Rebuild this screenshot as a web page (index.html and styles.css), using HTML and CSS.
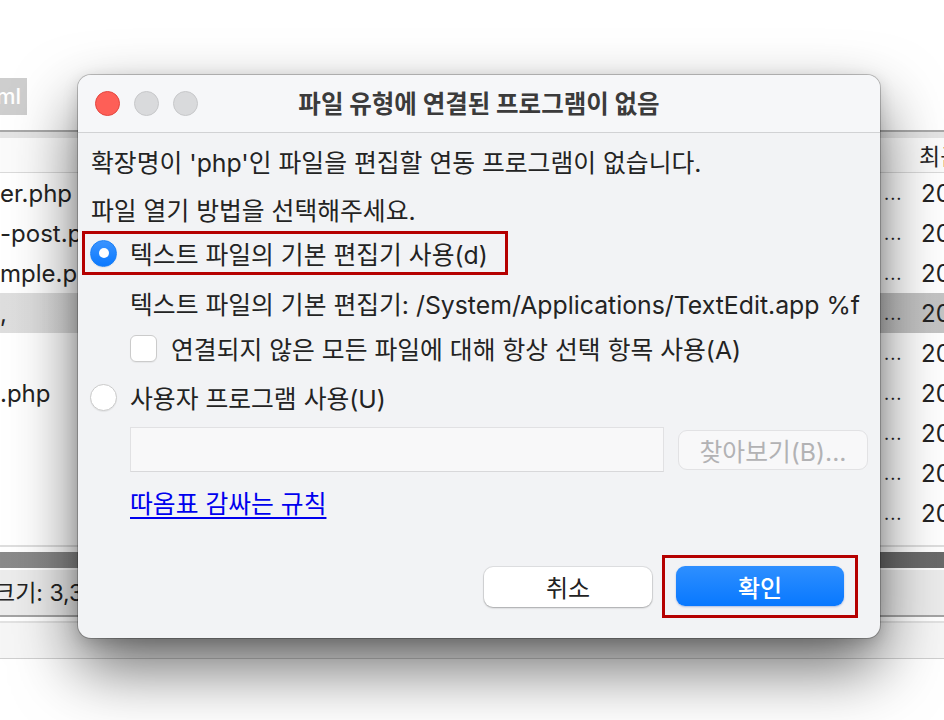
FILE: index.html
```html
<!DOCTYPE html>
<html lang="ko">
<head>
    <meta charset="UTF-8">
    <meta name="viewport" content="width=device-width, initial-scale=1.0">
    <title>파일 유형에 연결된 프로그램이 없음</title>
    <link rel="stylesheet" href="styles.css">
</head>
<body>
    <!-- window behind the dialog -->
    <div class="app">
        <div class="toolbar">
            <div class="tab">ml</div>
        </div>

        <div class="list-head">
            <span class="col-sep"></span>
            <span class="col-title">최근 수정</span>
        </div>

        <div class="rows">
            <div class="row"><span class="name">er.php</span><span class="ell">...</span><span class="date">2023-05-02</span></div>
            <div class="row"><span class="name">-post.php</span><span class="ell">...</span><span class="date">2023-05-02</span></div>
            <div class="row"><span class="name">mple.php</span><span class="ell">...</span><span class="date">2023-05-02</span></div>
            <div class="row selected"><span class="name">,</span><span class="ell">...</span><span class="date">2023-05-02</span></div>
            <div class="row"><span class="name"></span><span class="ell">...</span><span class="date">2023-05-02</span></div>
            <div class="row"><span class="name">.php</span><span class="ell">...</span><span class="date">2023-05-02</span></div>
            <div class="row"><span class="name"></span><span class="ell">...</span><span class="date">2023-05-02</span></div>
            <div class="row"><span class="name"></span><span class="ell">...</span><span class="date">2023-05-02</span></div>
            <div class="row"><span class="name"></span><span class="ell">...</span><span class="date">2023-05-02</span></div>
        </div>

        <div class="scroll-track"><div class="scroll-bar"></div></div>
        <div class="status">크기: 3,341 바이트</div>
        <div class="status-foot"></div>
    </div>

    <!-- dialog -->
    <div class="dialog">
        <div class="titlebar">
            <div class="lights">
                <span class="light red"></span>
                <span class="light"></span>
                <span class="light"></span>
            </div>
            <div class="title">파일 유형에 연결된 프로그램이 없음</div>
        </div>

        <div class="dialog-body">
            <div class="line">확장명이 'php'인 파일을 편집할 연동 프로그램이 없습니다.</div>
            <div class="line line-2">파일 열기 방법을 선택해주세요.</div>

            <div class="mark option-default">
                <span class="radio checked"></span>
                <span>텍스트 파일의 기본 편집기 사용(d)</span>
            </div>

            <div class="line indent path">텍스트 파일의 기본 편집기: /System/Applications/TextEdit.app %f</div>

            <div class="line indent check-row">
                <span class="checkbox"></span>
                <span>연결되지 않은 모든 파일에 대해 항상 선택 항목 사용(A)</span>
            </div>

            <div class="line option-user">
                <span class="radio"></span>
                <span>사용자 프로그램 사용(U)</span>
            </div>

            <div class="indent program-row">
                <div class="text-input"></div>
                <button class="browse-btn" disabled>찾아보기(B)...</button>
            </div>

            <div class="line indent link-row">
                <a href="#" class="rule-link">따옴표 감싸는 규칙</a>
            </div>

            <div class="footer">
                <button class="btn">취소</button>
                <span class="mark ok-mark"><button class="btn primary">확인</button></span>
            </div>
        </div>
    </div>
</body>
</html>
```

FILE: styles.css
```css
* {
    margin: 0;
    padding: 0;
    box-sizing: border-box;
}

body {
    width: 944px;
    height: 720px;
    overflow: hidden;
    background: #fff;
    font-family: 'Inter', 'Noto Sans CJK KR', sans-serif;
    color: #232323;
    position: relative;
}

/* background window */
.app {
    width: 944px;
}

.toolbar {
    height: 130px;
    padding-top: 78px;
}

.tab {
    width: 27px;
    height: 37px;
    background: #cecece;
    color: #fff;
    font-size: 22px;
    font-weight: 500;
    line-height: 37px;
    text-indent: -4px;
    overflow: hidden;
}

.list-head {
    height: 43px;
    border-top: 2px solid #a8a8a8;
    box-shadow: inset 0 6px 0 #e4e4e4;
    border-bottom: 1px solid #dadada;
    background: #fbfbfb;
    display: flex;
    align-items: center;
    padding-left: 915px;
    padding-top: 6px;
    font-size: 23px;
    white-space: nowrap;
    overflow: hidden;
}

.col-sep {
    width: 4px;
    height: 22px;
    background: #dcdcdc;
    margin-right: 4px;
}

.row {
    height: 40px;
    display: flex;
    align-items: center;
    font-size: 24px;
    white-space: nowrap;
    overflow: hidden;
}

.row.selected {
    background: linear-gradient(to right, #dedede, #c4c4c4);
}

.name {
    flex: 1;
}

.ell {
    width: 39px;
    font-size: 18px;
    letter-spacing: 1px;
    padding-left: 2px;
}

.date {
    width: 23px;
    overflow: hidden;
}

.scroll-track {
    margin-top: 12px;
    border-top: 2px solid #dedede;
    padding-top: 5px;
}

.scroll-bar {
    height: 16px;
    background: linear-gradient(to right, #8a8a8a, #6a6a6a);
}

.status {
    height: 47px;
    margin-top: 2px;
    background: #ececec;
    border-bottom: 2px solid #a4a4a4;
    font-size: 23px;
    line-height: 46px;
    text-indent: -6px;
    white-space: nowrap;
}

.status-foot {
    height: 38px;
    border-top: 2px solid #e2e2e2;
    border-bottom: 1px solid #cfcfcf;
    background: #f6f6f6;
    margin-top: 4px;
}

/* dialog */
.dialog {
    position: absolute;
    left: 78px;
    top: 75px;
    width: 802px;
    height: 563px;
    background: #f2f3f5;
    border-radius: 13px;
    box-shadow: 0 0 0 1px rgba(0,0,0,0.22), 0 30px 64px rgba(0,0,0,0.58), 0 4px 16px rgba(0,0,0,0.15);
    overflow: hidden;
}

.titlebar {
    height: 58px;
    background: #f6f7f9;
    border-bottom: 1px solid #d1d2d4;
    position: relative;
    display: flex;
    align-items: center;
    justify-content: center;
}

.lights {
    position: absolute;
    left: 17px;
    top: 16px;
    display: flex;
    gap: 14px;
}

.light {
    width: 25px;
    height: 25px;
    border-radius: 50%;
    background: #d9dadc;
    border: 1px solid #c7c8ca;
}

.light.red {
    background: #fe5f57;
    border-color: #e4463f;
}

.title {
    font-size: 24.5px;
    font-weight: 700;
    color: #3b3b3b;
    margin-top: -2px;
}

.dialog-body {
    padding: 8px 0 0 13px;
    display: flex;
    flex-direction: column;
    align-items: flex-start;
    font-size: 24.8px;
}

.line {
    height: 40px;
    display: flex;
    align-items: center;
    white-space: nowrap;
}

.line-2 {
    margin-top: 8px;
}

.indent {
    margin-left: 39px;
}

.mark {
    border: 3px solid #b50000;
}

.option-default {
    margin-top: 2px;
    margin-left: -9px;
    height: 44px;
    padding: 0 17px 0 5px;
    display: flex;
    align-items: center;
    gap: 13px;
    white-space: nowrap;
}

.radio {
    width: 27px;
    height: 27px;
    border-radius: 50%;
    background: #fff;
    border: 1px solid #cacaca;
    box-shadow: 0 1px 1px rgba(0,0,0,0.06);
    display: flex;
    align-items: center;
    justify-content: center;
    flex-shrink: 0;
}

.radio.checked {
    background: linear-gradient(#3a94ff, #0b79ff);
    border-color: #1a7ff5;
}

.radio.checked::after {
    content: '';
    width: 10px;
    height: 10px;
    border-radius: 50%;
    background: #fff;
}

.path {
    margin-top: 8px;
}

.check-row {
    margin-top: 5px;
    gap: 14px;
}

.checkbox {
    width: 27px;
    height: 27px;
    border-radius: 6px;
    background: #fff;
    border: 1px solid #cbcbcb;
    box-shadow: 0 1px 1px rgba(0,0,0,0.05);
}

.option-user {
    margin-top: 9px;
    margin-left: -1px;
    gap: 13px;
}

.program-row {
    margin-top: 10px;
    display: flex;
    align-items: center;
    gap: 14px;
}

.text-input {
    width: 534px;
    height: 45px;
    background: #f8f8f9;
    border: 1px solid #e1e1e3;
    border-bottom-color: #d8d8da;
}

.browse-btn {
    width: 190px;
    height: 40px;
    border-radius: 9px;
    border: 1px solid #e2e2e4;
    background: #f8f8f9;
    color: #b2b2b4;
    font-family: inherit;
    font-size: 24.8px;
}

.link-row {
    margin-top: 10px;
}

.rule-link {
    color: #0000ee;
    text-decoration: underline;
    text-decoration-thickness: 2px;
    text-underline-offset: 4px;
}

.footer {
    align-self: stretch;
    margin-top: 33px;
    padding-right: 22px;
    display: flex;
    justify-content: flex-end;
    align-items: center;
    gap: 10px;
}

.ok-mark {
    padding: 8px 11px 9px;
}

.btn {
    display: block;
    width: 168px;
    height: 40px;
    border-radius: 9px;
    border: none;
    background: #fff;
    box-shadow: 0 0 0 1px rgba(0,0,0,0.08), 0 1px 2px rgba(0,0,0,0.25);
    color: #222;
    font-family: inherit;
    font-size: 24px;
    font-weight: 400;
}

.btn.primary {
    background: linear-gradient(#2e8fff, #0878ff);
    color: #fff;
    font-weight: 500;
    box-shadow: 0 1px 2px rgba(0,60,180,0.3);
}
```
